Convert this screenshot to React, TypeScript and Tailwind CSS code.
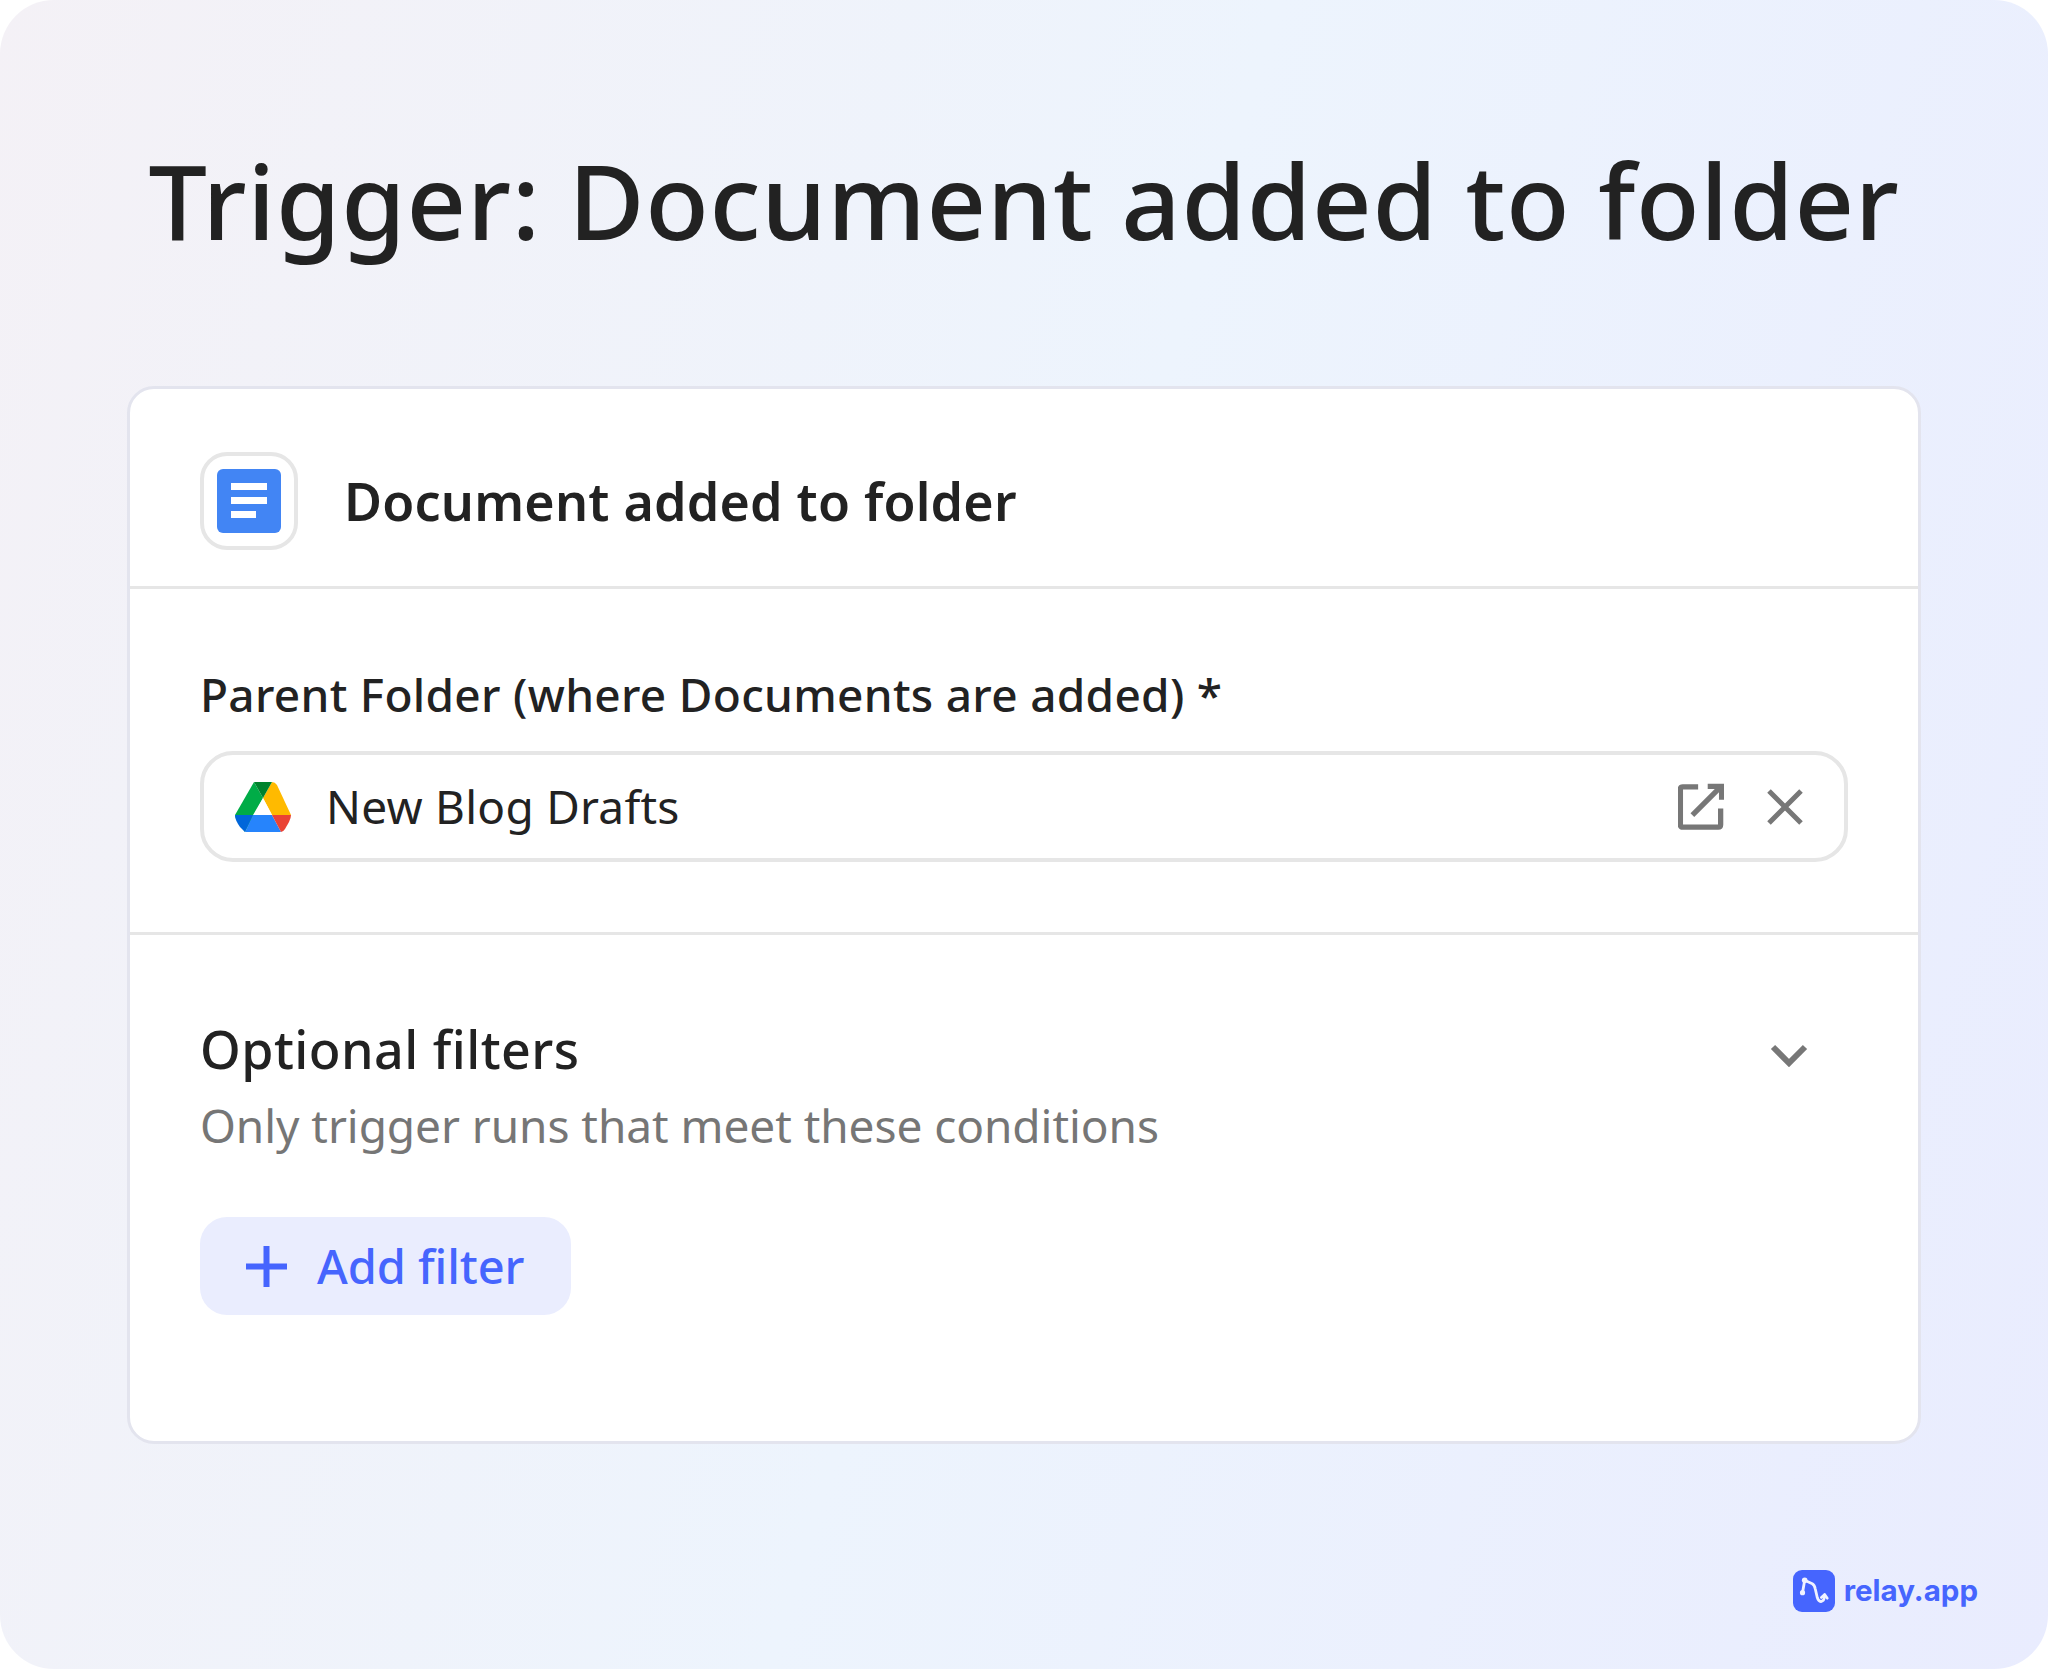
export default function App() {
  return (
    <div className="w-[2048px] h-[1669px] rounded-[54px] bg-[linear-gradient(107deg,#f4f1f6_0%,#edf4fd_50%,#e9ecfe_100%)] flex flex-col px-[127px] text-[#222222] font-['Noto_Sans',sans-serif]">
      <h1 className="pt-[130px] h-[386px] text-center text-[104px] leading-[140px] tracking-[0.75px] font-medium whitespace-nowrap">Trigger: Document added to folder</h1>
      <div className="h-[1058px] rounded-[27px] border-[3px] border-[#e3e4ee] bg-white flex flex-col">
        <div className="h-[200px] shrink-0 border-b-[3px] border-[#e6e6e6] px-[70px] pt-[63px] flex items-start gap-[46px]">
          <div className="w-[98px] h-[98px] rounded-[27px] border-[4px] border-[#e6e6e6] flex items-center justify-center shrink-0">
            <svg width="64" height="64" viewBox="0 0 64 64">
              <rect width="64" height="64" rx="6" fill="#4285f4" />
              <rect x="14" y="14" width="36" height="7" fill="#fff" />
              <rect x="14" y="28" width="36" height="7" fill="#fff" />
              <rect x="14" y="42" width="25" height="7" fill="#fff" />
            </svg>
          </div>
          <div className="text-[52px] leading-[98px] tracking-[0.2px] font-semibold">Document added to folder</div>
        </div>
        <div className="h-[346px] shrink-0 border-b-[3px] border-[#e6e6e6] px-[70px] pt-[74px]">
          <div className="text-[46px] leading-[62px] tracking-[0.3px] font-medium">Parent Folder (where Documents are added) *</div>
          <div className="mt-[26px] h-[111px] rounded-[33px] border-[4px] border-[#e6e6e6] flex items-center pl-[31px] pr-[41px]">
            <svg width="56" height="50" viewBox="0 0 56 50" className="shrink-0">
              <path d="M19 0 L28 16 L10 50 L4 42 Q0 36 0 33Z" fill="#00ac47" />
              <path d="M37 0Q40 0 42 3L56 33H37L28 16Z" fill="#ffba00" />
              <path d="M0 33H18L10 50L5 45Q0 38 0 33Z" fill="#0066da" />
              <path d="M18 33H37L46 50H10Z" fill="#2684fc" />
              <path d="M37 33H56Q56 36 54 40L50 47Q48 50 46 50Z" fill="#ea4335" />
              <path d="M19 0H37L28 16Z" fill="#00832d" />
              <path d="M28 16L37 33H18Z" fill="#fff" />
            </svg>
            <div className="ml-[35px] pb-[2px] text-[46px] leading-[60px] tracking-[0.25px] flex-1">New Blog Drafts</div>
            <svg width="46" height="47" viewBox="0 0 48 48" fill="none" stroke="#777777" strokeWidth="5.500" className="shrink-0">
              <path d="M21 3.500H5Q2.500 3.500 2.500 6V43Q2.500 45.500 5 45.500H42Q44.500 45.500 44.500 43V26" />
              <path d="M31 3H45.500V17" />
              <path d="M45 3L15 33" />
            </svg>
            <svg width="36" height="36" viewBox="0 0 36 36" fill="none" stroke="#777777" strokeWidth="5" className="ml-[43px] shrink-0">
              <path d="M2 2L34 34M34 2L2 34" />
            </svg>
          </div>
        </div>
        <div className="flex-1 px-[70px] pt-[79px]">
          <div className="flex items-start justify-between pr-[40px]">
            <div className="text-[52px] leading-[70px] tracking-[0.45px] font-medium">Optional filters</div>
            <svg width="38" height="24" viewBox="0 0 38 24" fill="none" stroke="#777777" strokeWidth="6" className="mt-[29px] shrink-0">
              <path d="M3 4L19 20L35 4" />
            </svg>
          </div>
          <div className="mt-[10px] text-[46px] leading-[62px] tracking-[-0.06px] text-[#767676]">Only trigger runs that meet these conditions</div>
          <div className="mt-[61px] w-[371px] h-[98px] rounded-[27px] bg-[#eaedfe] flex items-center pl-[46px] text-[#4665fe]">
            <svg width="41" height="41" viewBox="0 0 41 41" fill="none" stroke="#4665fe" strokeWidth="6" className="shrink-0">
              <path d="M20.500 0V41M0 20.500H41" />
            </svg>
            <div className="ml-[30px] text-[47px] leading-[60px] tracking-[-0.1px] font-medium">Add filter</div>
          </div>
        </div>
      </div>
      <div className="mt-[126px] h-[42px] flex items-start justify-end gap-[9px] -mr-[57px]">
        <svg width="42" height="42" viewBox="0 0 42 42" fill="none" className="shrink-0">
          <rect width="42" height="42" rx="9" fill="#4665fe" />
          <path d="M9.500 22.700L11.700 10.300L19.300 13.700Q21.500 15 22.300 19L24.300 27.700Q25.500 31.700 28 31.500Q31.500 31 31.700 25" stroke="#f0f2ff" strokeWidth="2.800" strokeLinecap="round" strokeLinejoin="round" />
          <path d="M28.300 27.500L31.700 24.500L34.300 28.300" stroke="#f0f2ff" strokeWidth="2.600" strokeLinecap="round" strokeLinejoin="round" />
          <circle cx="11.700" cy="10.300" r="2.800" fill="#f0f2ff" />
          <circle cx="9.500" cy="22.700" r="2.600" fill="#f0f2ff" />
        </svg>
        <div className="text-[29.5px] leading-[40px] font-bold text-[#4665fe] font-['Inter',sans-serif]">relay.app</div>
      </div>
    </div>
  );
}
